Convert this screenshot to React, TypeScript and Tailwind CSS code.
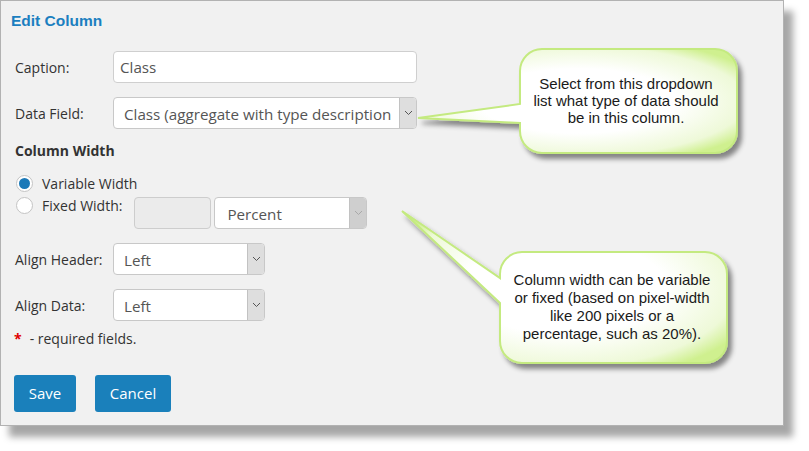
import React from "react";

const Chevron = ({ disabled = false }: { disabled?: boolean }) => (
  <svg width="9" height="6" viewBox="0 0 9 6">
    <path
      d="M1 1 L4.5 4.5 L8 1"
      fill="none"
      stroke={disabled ? "#a9a9a9" : "#555"}
      strokeWidth="1"
    />
  </svg>
);

const Select = ({
  value,
  width,
  disabled = false,
  pad = "pl-[10px]",
}: {
  value: string;
  width: string;
  disabled?: boolean;
  pad?: string;
}) => (
  <div
    className={`${width} h-[32px] flex bg-white border border-[#c8c8c8] rounded-[4px] overflow-hidden`}
  >
    <div className={`flex-1 min-w-0 flex items-center ${pad} pt-[2px]`}>
      <div className="whitespace-nowrap text-[#555] text-[15.2px]">{value}</div>
    </div>
    <div
      className={`w-[17px] flex items-center justify-center border-l border-[#c2c2c2] ${
        disabled ? "bg-[#cfcfcf]" : "bg-[#dedede]"
      }`}
    >
      <Chevron disabled={disabled} />
    </div>
  </div>
);

const Radio = ({ checked, label }: { checked: boolean; label: string }) => (
  <div className="flex items-center h-[22px]">
    <div className="ml-[1px] w-[17px] h-[17px] rounded-full border border-[#c4c4c4] bg-white flex items-center justify-center">
      {checked && <div className="w-[11px] h-[11px] rounded-full bg-[#1b79b8]" />}
    </div>
    <span className="ml-[9px] text-[14px] text-[#333]">{label}</span>
  </div>
);

const App = () => {
  return (
    <div
      className="relative w-[809px] h-[451px] bg-white overflow-hidden"
      style={{ fontFamily: '"Open Sans", sans-serif' }}
    >
      <div className="w-[784px] h-[426px] bg-[#f1f1f1] border border-[#b2b2b2] shadow-[9px_11px_7px_rgba(0,0,0,0.35)] pl-[14px] pt-[10px]">
        <div
          className="text-[15.5px] leading-[20px] font-bold text-[#1b7fc0] -ml-[4px]"
          style={{ fontFamily: '"Liberation Sans", Arial, sans-serif' }}
        >
          Edit Column
        </div>

        <div className="flex items-center mt-[20px]">
          <div className="w-[98px] text-[14px] text-[#333]">Caption:</div>
          <div className="w-[304px] h-[32px] bg-white border border-[#cfcfcf] rounded-[4px] flex items-center pl-[6px] pt-[1px] text-[15.2px] text-[#555]">
            Class
          </div>
        </div>

        <div className="flex items-center mt-[14px]">
          <div className="w-[98px] text-[14px] text-[#333]">Data Field:</div>
          <Select value="Class (aggregate with type description" width="w-[304px]" />
        </div>

        <div className="mt-[12px] text-[14px] leading-[20px] font-bold text-[#333]">
          Column Width
        </div>

        <div className="mt-[11px]">
          <Radio checked={true} label="Variable Width" />
          <div className="flex items-start">
            <Radio checked={false} label="Fixed Width:" />
            <div className="ml-[12px] mt-[3px] w-[77px] h-[32px] bg-[#ebebeb] border border-[#cdcdcd] rounded-[4px]" />
            <div className="ml-[3px] mt-[3px]">
              <Select value="Percent" width="w-[153px]" disabled pad="pl-[12px]" />
            </div>
          </div>
        </div>

        <div className="flex items-center mt-[14px]">
          <div className="w-[98px] text-[14px] text-[#333]">Align Header:</div>
          <Select value="Left" width="w-[152px]" />
        </div>

        <div className="flex items-center mt-[14px]">
          <div className="w-[98px] text-[14px] text-[#333]">Align Data:</div>
          <Select value="Left" width="w-[152px]" />
        </div>

        <div className="flex items-center mt-[7px] h-[20px] text-[14px] text-[#333]">
          <span className="text-[#e00000] font-bold -ml-[1px]">*</span>
          <span className="ml-[8px]">- required fields.</span>
        </div>

        <div className="flex mt-[27px] gap-[19px] -ml-[1px]">
          <button className="w-[62px] h-[37px] rounded-[3px] bg-[#1a80bb] text-white text-[15px]">
            Save
          </button>
          <button className="w-[76px] h-[37px] rounded-[3px] bg-[#1a80bb] text-white text-[15px]">
            Cancel
          </button>
        </div>
      </div>

      <svg className="absolute left-0 top-0" width="809" height="451" viewBox="0 0 809 451">
        <defs>
          <radialGradient id="g1" cx="0.5" cy="0.5" r="0.62">
            <stop offset="0.5" stopColor="#ffffff" />
            <stop offset="0.85" stopColor="#eef9d8" />
            <stop offset="1" stopColor="#cff08f" />
          </radialGradient>
          <filter id="sh" x="-10%" y="-10%" width="130%" height="140%">
            <feDropShadow dx="4" dy="5" stdDeviation="2.5" floodColor="#000" floodOpacity="0.45" />
          </filter>
        </defs>
        <path
          d="M542 49 H715 A22 22 0 0 1 737 71 V131 A22 22 0 0 1 715 153 H542 A22 22 0 0 1 520 131 V123 L418 118 L520 104 V71 A22 22 0 0 1 542 49 Z"
          fill="url(#g1)"
          stroke="#c4ea80"
          strokeWidth="2"
          filter="url(#sh)"
        />
        <path
          d="M522 252 H705 A22 22 0 0 1 727 274 V341 A22 22 0 0 1 705 363 H522 A22 22 0 0 1 500 341 V303 L402 211 L500 278 V274 A22 22 0 0 1 522 252 Z"
          fill="url(#g1)"
          stroke="#c4ea80"
          strokeWidth="2"
          filter="url(#sh)"
        />
      </svg>

      <div
        className="absolute left-[518px] top-[75px] w-[216px] text-center text-[15px] leading-[17px] text-[#1a1a1a]"
        style={{ fontFamily: '"Liberation Sans", Arial, sans-serif' }}
      >
        Select from this dropdown
        <br />
        list what type of data should
        <br />
        be in this column.
      </div>
      <div
        className="absolute left-[498px] top-[271px] w-[228px] text-center text-[15px] leading-[18px] text-[#1a1a1a]"
        style={{ fontFamily: '"Liberation Sans", Arial, sans-serif' }}
      >
        Column width can be variable
        <br />
        or fixed (based on pixel-width
        <br />
        like 200 pixels or a
        <br />
        percentage, such as 20%).
      </div>
    </div>
  );
};

export default App;
